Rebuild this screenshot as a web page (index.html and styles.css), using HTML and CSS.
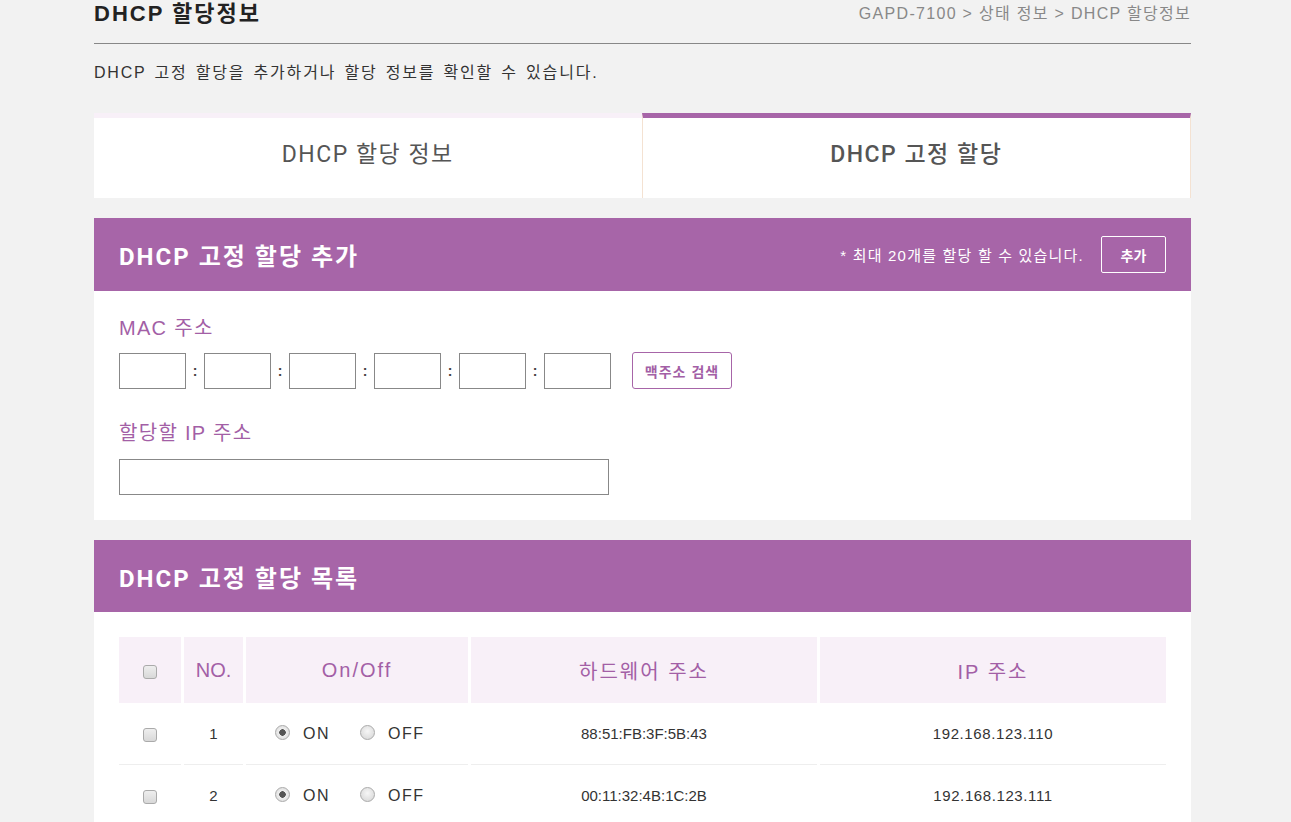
FILE: index.html
```html
<!DOCTYPE html>
<html lang="ko">
<head>
<meta charset="utf-8">
<title>DHCP 할당정보</title>
<link rel="stylesheet" href="styles.css">
</head>
<body>
<div class="page">
  <div class="page-head">
    <h1 class="page-title">DHCP 할당정보</h1>
    <div class="crumb">GAPD-7100 &gt; 상태 정보 &gt; DHCP 할당정보</div>
  </div>
  <p class="desc">DHCP 고정 할당을 추가하거나 할당 정보를 확인할 수 있습니다.</p>

  <div class="tabs">
    <div class="tab">DHCP 할당 정보</div>
    <div class="tab active">DHCP 고정 할당</div>
  </div>

  <section class="panel">
    <div class="panel-head">
      <h2 class="panel-title">DHCP 고정 할당 추가</h2>
      <div class="panel-tools">
        <span class="note">* 최대 20개를 할당 할 수 있습니다.</span>
        <button class="btn-add">추가</button>
      </div>
    </div>
    <div class="panel-body form-body">
      <div class="field-label">MAC 주소</div>
      <div class="mac-row">
        <input class="mac" type="text"><span class="colon">:</span>
        <input class="mac" type="text"><span class="colon">:</span>
        <input class="mac" type="text"><span class="colon">:</span>
        <input class="mac" type="text"><span class="colon">:</span>
        <input class="mac" type="text"><span class="colon">:</span>
        <input class="mac" type="text">
        <button class="btn-search">맥주소 검색</button>
      </div>
      <div class="field-label second">할당할 IP 주소</div>
      <input class="ip" type="text">
    </div>
  </section>

  <section class="panel">
    <div class="panel-head short">
      <h2 class="panel-title">DHCP 고정 할당 목록</h2>
    </div>
    <div class="panel-body list-body">
      <table class="list">
        <colgroup>
          <col class="c-chk"><col class="c-no"><col class="c-onoff"><col class="c-hw"><col class="c-ip">
        </colgroup>
        <thead>
          <tr>
            <th><span class="chk"></span></th>
            <th class="th-no">NO.</th>
            <th>On/Off</th>
            <th>하드웨어 주소</th>
            <th>IP 주소</th>
          </tr>
        </thead>
        <tbody>
          <tr>
            <td><span class="chk"></span></td>
            <td>1</td>
            <td class="onoff"><span class="radio on"></span><span class="rlabel">ON</span><span class="radio"></span><span class="rlabel">OFF</span></td>
            <td class="hw">88:51:FB:3F:5B:43</td>
            <td class="ipv">192.168.123.110</td>
          </tr>
          <tr>
            <td><span class="chk"></span></td>
            <td>2</td>
            <td class="onoff"><span class="radio on"></span><span class="rlabel">ON</span><span class="radio"></span><span class="rlabel">OFF</span></td>
            <td class="hw">00:11:32:4B:1C:2B</td>
            <td class="ipv">192.168.123.111</td>
          </tr>
        </tbody>
      </table>
    </div>
  </section>
</div>
</body>
</html>
```

FILE: styles.css
```css
* { box-sizing: border-box; }
html, body { margin: 0; padding: 0; }
body {
  background: #f2f2f2;
  font-family: "Liberation Sans", "Noto Sans CJK KR", sans-serif;
  color: #333;
}
.page {
  width: 1097px;
  margin-left: 94px;
}
.page-head {
  display: flex;
  justify-content: space-between;
  align-items: center;
  height: 44px;
  border-bottom: 1px solid #888;
  padding-bottom: 15px;
}
.page-title {
  margin: 0;
  font-size: 22px;
  line-height: 28px;
  font-weight: bold;
  color: #222;
  letter-spacing: 2px;
}
.crumb {
  font-size: 16px;
  line-height: 20px;
  color: #888;
  letter-spacing: 1.3px;
}
.desc {
  margin: 0;
  height: 69px;
  padding-top: 19px;
  font-size: 16px;
  line-height: 20px;
  color: #333;
  letter-spacing: 1.8px;
  word-spacing: 2px;
}
.tabs {
  display: flex;
  height: 85px;
}
.tab {
  flex: 1;
  display: flex;
  align-items: center;
  justify-content: center;
  background: #fff;
  border-top: 5px solid #f8f0f8;
  font-family: "Roboto", "Noto Sans CJK KR", sans-serif;
  font-size: 23px;
  letter-spacing: 1.5px;
  color: #555;
  padding-bottom: 12px;
}
.tab.active {
  border-top-color: #a765a8;
  border-left: 1px solid #f4e2d2;
  border-right: 1px solid #f4e2d2;
  font-weight: 500;
}
.panel {
  margin-top: 20px;
  background: #fff;
}
.panel-head {
  display: flex;
  justify-content: space-between;
  align-items: center;
  height: 73px;
  background: #a765a8;
  padding: 0 25px;
  color: #fff;
}
.panel-head.short { height: 72px; }
.panel-title {
  margin: 0;
  font-family: "Roboto", "Noto Sans CJK KR", sans-serif;
  font-size: 24px;
  font-weight: 700;
  letter-spacing: 2px;
  color: #fff;
}
.panel-tools {
  display: flex;
  align-items: center;
  gap: 17px;
}
.note {
  font-size: 15px;
  letter-spacing: 1.2px;
  color: #fff;
}
.btn-add {
  width: 65px;
  height: 37px;
  background: transparent;
  border: 1px solid #fff;
  border-radius: 2px;
  color: #fff;
  font-family: "Noto Sans CJK KR", sans-serif;
  font-size: 14px;
  font-weight: bold;
  padding: 0;
}
.form-body {
  padding: 25px;
  height: 229px;
}
.field-label {
  font-size: 20px;
  letter-spacing: 1.3px;
  color: #a35fa6;
  line-height: 24px;
  height: 36px;
}
.field-label.second {
  margin-top: 32px;
  height: 38px;
}
.mac-row {
  display: flex;
  align-items: center;
}
.mac {
  width: 67px;
  height: 36px;
  border: 1px solid #888;
  margin: 0;
  padding: 0 4px;
  background: #fff;
}
.colon {
  width: 18px;
  text-align: center;
  font-size: 14px;
  color: #444;
  font-weight: bold;
}
.btn-search {
  margin-left: 21px;
  width: 100px;
  height: 37px;
  background: #fff;
  border: 1px solid #a765a8;
  border-radius: 3px;
  color: #a35fa6;
  font-family: "Noto Sans CJK KR", sans-serif;
  font-size: 14px;
  letter-spacing: 1px;
  font-weight: bold;
  padding: 0;
}
.ip {
  display: block;
  width: 490px;
  height: 36px;
  border: 1px solid #888;
  margin: 0;
  background: #fff;
}
.list-body {
  padding: 25px 25px 0;
}
.list {
  width: calc(100% + 6px);
  margin: 0 -3px;
  border-collapse: separate;
  border-spacing: 3px 0;
  table-layout: fixed;
}
.c-chk { width: 62px; }
.c-no { width: 59px; }
.c-onoff { width: 222px; }
.c-hw { width: 346px; }
.c-ip { width: 346px; }
.list th {
  height: 66px;
  background: #f8f0f8;
  font-weight: normal;
  font-size: 20px;
  color: #a35fa6;
  text-align: center;
  vertical-align: middle;
  letter-spacing: 2px;
  padding-top: 2px;
}
.list th.th-no { letter-spacing: 0; }
.list td {
  height: 62px;
  text-align: center;
  vertical-align: middle;
  font-size: 15px;
  color: #333;
  border-bottom: 1px solid #eee;
}
.list td.hw { letter-spacing: 0; }
.list td.ipv { letter-spacing: 0.6px; }
.chk {
  display: inline-block;
  width: 14px;
  height: 14px;
  border: 1px solid #aaa;
  border-radius: 3px;
  background: linear-gradient(#eee, #d8d8d8);
  vertical-align: middle;
}
.list td.onoff {
  text-align: left;
  padding-left: 29px;
}
.radio {
  display: inline-block;
  width: 15px;
  height: 15px;
  border: 1px solid #aaa;
  border-radius: 50%;
  background: radial-gradient(circle at 50% 40%, #f6f6f6, #d4d4d4);
  vertical-align: middle;
  position: relative;
  top: -2px;
}
.radio.on {
  background: radial-gradient(circle, #555 0 3px, #eee 3.5px, #d8d8d8 100%);
}
.rlabel {
  display: inline-block;
  margin-left: 13px;
  width: 57px;
  font-size: 16px;
  letter-spacing: 1.5px;
  color: #333;
}
```
